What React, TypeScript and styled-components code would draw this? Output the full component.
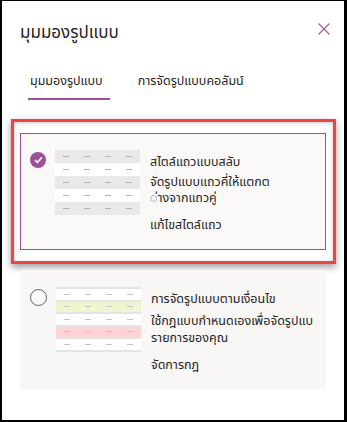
import React, { ReactElement } from 'react';
import styled, { createGlobalStyle } from 'styled-components';

const GlobalStyle = createGlobalStyle`
  body {
    margin: 0;
    font-family: "Noto Sans", "Noto Sans Thai", Tahoma, sans-serif;
    color: #252423;
  }
`;

const purple = '#9b4f96';

const Frame = styled.div`
  width: 347px;
  height: 422px;
  box-sizing: border-box;
  border: 2px solid #000;
  border-top-width: 1px;
  border-right-width: 3px;
  background: #fff;
`;

const Header = styled.div`
  display: flex;
  align-items: center;
  justify-content: space-between;
  height: 24px;
  padding: 19px 13px 0 18px;
`;

const Title = styled.h1`
  margin: 0;
  font-size: 17px;
  font-weight: 400;
  line-height: 24px;
`;

const CloseButton = styled.button`
  width: 14px;
  height: 14px;
  padding: 0;
  border: 0;
  background: none;
  display: flex;
  align-items: center;
  justify-content: center;
  margin-top: -6px;
`;

const TabBar = styled.div`
  display: flex;
  gap: 26px;
  margin-top: 22px;
  padding-left: 26px;
`;

const Tab = styled.div<{ $active?: boolean }>`
  font-size: 12.5px;
  line-height: 20px;
  padding: 5px 7px 7px 2px;
  border-bottom: 2px solid ${(p) => (p.$active ? purple : 'transparent')};
`;

const Highlight = styled.div`
  margin: 19px 8px 0 9px;
  border: 3px solid #ef4444;
  padding: 11px 7px 11px 6px;
  box-shadow: 0 3px 7px rgba(0, 0, 0, 0.4), inset 0 1px 4px rgba(0, 0, 0, 0.22);
  background: #fff;
`;

const Card = styled.div<{ $selected?: boolean }>`
  box-sizing: border-box;
  min-height: 117px;
  display: flex;
  align-items: flex-start;
  padding: 16px 9px 16px 9px;
  background: #faf9f8;
  border: 1px solid ${(p) => (p.$selected ? purple : 'transparent')};
`;

const SecondCard = styled(Card)`
  margin: 6px 18px 0 18px;
  background: #f8f7f6;
`;

const Check = styled.span`
  flex: none;
  width: 16px;
  height: 16px;
  margin-top: 2px;
  border-radius: 50%;
  background: ${purple};
  display: flex;
  align-items: center;
  justify-content: center;
`;

const Radio = styled.span`
  flex: none;
  box-sizing: border-box;
  width: 17px;
  height: 17px;
  margin-top: 2px;
  border-radius: 50%;
  border: 1px solid #605e5c;
  background: #fbfbfb;
`;

const Preview = styled.div<{ $lined?: boolean }>`
  flex: none;
  width: 85px;
  margin-left: 9px;
  display: flex;
  flex-direction: column;
  border-top: ${(p) => (p.$lined ? '2px solid #e4e4e4' : 'none')};
`;

const PreviewRow = styled.div<{ $bg: string; $lined?: boolean }>`
  box-sizing: border-box;
  height: ${(p) => (p.$lined ? '12.5px' : '13px')};
  display: grid;
  grid-template-columns: repeat(4, 1fr);
  align-items: center;
  justify-items: center;
  background: ${(p) => p.$bg};
  border-bottom: ${(p) => (p.$lined ? '2px solid #e4e4e4' : 'none')};
`;

const Dash = styled.span<{ $light?: boolean }>`
  width: 6px;
  height: 1px;
  background: ${(p) => (p.$light ? '#c4c4c4' : '#b2b2b2')};
`;

const Body = styled.div`
  margin-left: 10px;
  margin-top: 4px;
  font-size: 12.5px;
  line-height: 15px;
`;

const CardTitle = styled.div``;

const Desc = styled.div<{ $tall?: boolean }>`
  margin-top: ${(p) => (p.$tall ? '6px' : '5px')};
  line-height: ${(p) => (p.$tall ? '17px' : '16px')};
`;

const Action = styled.div`
  margin-top: 11px;
`;

type RowProps = { bg: string; lined?: boolean };

const Row = ({ bg, lined }: RowProps): ReactElement => (
  <PreviewRow $bg={bg} $lined={lined}>
    {[0, 1, 2, 3].map((i) => (
      <Dash key={i} $light={lined} />
    ))}
  </PreviewRow>
);

const App = (): ReactElement => (
  <>
    <GlobalStyle />
    <Frame>
      <Header>
        <Title>มุมมองรูปแบบ</Title>
        <CloseButton aria-label="ปิด">
          <svg width="12" height="12" viewBox="0 0 12 12">
            <path d="M0.5 0.5 L11.5 11.5 M11.5 0.5 L0.5 11.5" stroke="#a8549f" strokeWidth="1.1" />
          </svg>
        </CloseButton>
      </Header>
      <TabBar>
        <Tab $active>มุมมองรูปแบบ</Tab>
        <Tab>การจัดรูปแบบคอลัมน์</Tab>
      </TabBar>
      <Highlight>
        <Card $selected>
          <Check>
            <svg width="9" height="8" viewBox="0 0 9 8">
              <path d="M1 4.2 L3.4 6.4 L8 1.4" stroke="#fff" strokeWidth="1.6" fill="none" />
            </svg>
          </Check>
          <Preview>
            <Row bg="#e9e9e9" />
            <Row bg="#ffffff" />
            <Row bg="#e9e9e9" />
            <Row bg="#ffffff" />
            <Row bg="#e9e9e9" />
          </Preview>
          <Body>
            <CardTitle>สไตล์แถวแบบสลับ</CardTitle>
            <Desc>
              จัดรูปแบบแถวคี่ให้แตกต
              <br />
              ◌่างจากแถวคู่
            </Desc>
            <Action>แก้ไขสไตล์แถว</Action>
          </Body>
        </Card>
      </Highlight>
      <SecondCard>
        <Radio />
        <Preview $lined>
          <Row bg="#ffffff" lined />
          <Row bg="#f1f5cf" lined />
          <Row bg="#ffffff" lined />
          <Row bg="#fdd3d8" lined />
          <Row bg="#ffffff" lined />
        </Preview>
        <Body>
          <CardTitle>การจัดรูปแบบตามเงื่อนไข</CardTitle>
          <Desc $tall>
            ใช้กฎแบบกำหนดเองเพื่อจัดรูปแบ
            <br />
            รายการของคุณ
          </Desc>
          <Action>จัดการกฎ</Action>
        </Body>
      </SecondCard>
    </Frame>
  </>
);

export default App;
